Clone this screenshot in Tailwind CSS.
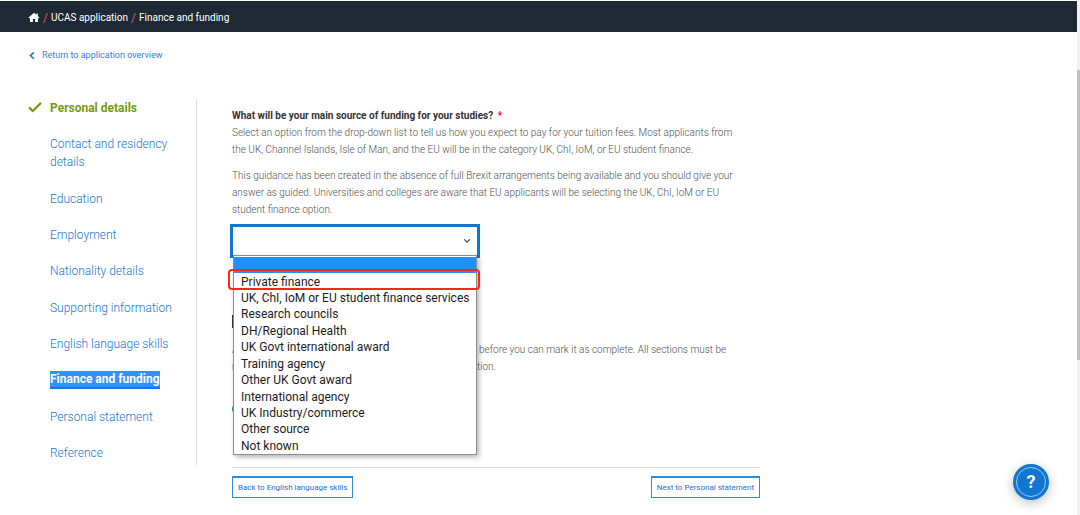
<!DOCTYPE html>
<html lang="en">

<head>
    <meta charset="UTF-8">
    <meta name="viewport" content="width=device-width, initial-scale=1.0">
    <script src="https://cdn.jsdelivr.net/npm/@tailwindcss/browser@4"></script>
    <title>UCAS application - Finance and funding</title>
</head>

<body class="flex h-screen overflow-hidden bg-white font-['Roboto',sans-serif] text-[#505050]">

    <div class="relative min-w-0 flex-1">
        <header class="mt-px flex h-[31px] items-center bg-[#1f2935] pt-[2px] pl-7 text-[10px] text-white">
            <nav aria-label="Breadcrumb" class="flex items-center gap-[3px]">
                <a href="#" aria-label="Home">
                    <svg class="h-3 w-3" viewBox="0 0 12 12" fill="currentColor">
                        <path d="M6 0.8 L0.6 5.6 L1.3 6.4 L2 6 V10 H4.9 V7 H7.1 V10 H10 V6 L10.7 6.4 L11.4 5.6 L9.9 4.2 V1.4 H8.4 V2.8 Z"></path>
                    </svg>
                </a>
                <span class="text-xs text-[#f0506e]">/</span>
                <a href="#">UCAS application</a>
                <span class="text-xs text-[#f0506e]">/</span>
                <a href="#">Finance and funding</a>
            </nav>
        </header>

        <a href="#" class="mt-4 ml-7 inline-flex h-4 items-center gap-[6px] text-[9px] text-[#3580d2]">
            <svg class="h-2 w-2" viewBox="0 0 8 8" fill="none" stroke="#0f76d1" stroke-width="1.5">
                <path d="M5.8 0.4 L2.4 3.6 L5.8 6.8"></path>
            </svg>
            Return to application overview
        </a>

        <div class="mt-8 flex">
            <nav aria-label="Sections" class="h-[366px] w-[197px] shrink-0 border-r border-[#dedede] pl-7">
                <ul class="flex h-full flex-col justify-between pb-[3px] pl-[22px] text-xs leading-[18px] font-light text-[#1878cf]">
                    <li class="-ml-[22px] flex items-center gap-2 font-bold text-[#769a09]">
                        <svg class="h-3 w-[14px]" viewBox="0 0 14 12" fill="none" stroke="currentColor" stroke-width="2.2">
                            <path d="M1 5.4 L4.7 9 L13 0.9"></path>
                        </svg>
                        <a href="#">Personal details</a>
                    </li>
                    <li class="w-[120px]"><a href="#">Contact and residency details</a></li>
                    <li><a href="#">Education</a></li>
                    <li><a href="#">Employment</a></li>
                    <li><a href="#">Nationality details</a></li>
                    <li><a href="#">Supporting information</a></li>
                    <li><a href="#">English language skills</a></li>
                    <li class="flex"><a href="#" aria-current="page" class="border-b-2 border-[#0a78f5] bg-[#3390ff] leading-4 font-bold text-white">Finance and funding</a></li>
                    <li><a href="#">Personal statement</a></li>
                    <li><a href="#">Reference</a></li>
                </ul>
            </nav>

            <main class="ml-[35px] w-[528px] pt-2 text-[10px] leading-[17px] font-light">
                <label for="funding" class="block font-bold text-[#333]">What will be your main source of funding for your studies? <span class="ml-[2px] text-[#e4002b]">*</span></label>
                <p class="max-w-[508px]">Select an option from the drop-down list to tell us how you expect to pay for your tuition fees. Most applicants from the UK, Channel Islands, Isle of Man, and the EU will be in the category UK, ChI, IoM, or EU student finance.</p>
                <p class="mt-[9px] max-w-[508px]">This guidance has been created in the absence of full Brexit arrangements being available and you should give your answer as guided. Universities and colleges are aware that EU applicants will be selecting the UK, ChI, IoM or EU student finance option.</p>

                <div class="relative -ml-[2px] mt-[6px] w-[250px]">
                    <select id="funding" class="block h-[34px] w-full appearance-none border-3 border-[#0f76d1] bg-white"></select>
                    <svg class="absolute top-[13px] right-[9px] h-2 w-2" viewBox="0 0 8 8" fill="none" stroke="#444" stroke-width="1.2">
                        <path d="M1.2 2.4 L4 5.2 L6.8 2.4"></path>
                    </svg>
                    <ul role="listbox" aria-label="Main source of funding" class="absolute top-[31px] left-[3px] z-10 grid h-[200px] w-[244px] auto-rows-fr items-center border border-[#8c8c8c] bg-white pt-px text-xs leading-4 font-normal text-[#1c1c1c] shadow-[2px_2px_5px_rgba(0,0,0,0.3)]">
                        <li role="option" aria-selected="true" class="h-full bg-[#1e90ff]"></li>
                        <li role="option" class="pl-[7px]">Private finance</li>
                        <li role="option" class="pl-[7px]">UK, ChI, IoM or EU student finance services</li>
                        <li role="option" class="pl-[7px]">Research councils</li>
                        <li role="option" class="pl-[7px]">DH/Regional Health</li>
                        <li role="option" class="pl-[7px]">UK Govt international award</li>
                        <li role="option" class="pl-[7px]">Training agency</li>
                        <li role="option" class="pl-[7px]">Other UK Govt award</li>
                        <li role="option" class="pl-[7px]">International agency</li>
                        <li role="option" class="pl-[7px]">UK Industry/commerce</li>
                        <li role="option" class="pl-[7px]">Other source</li>
                        <li role="option" class="pl-[7px]">Not known</li>
                    </ul>
                    <div class="absolute top-[45px] -left-[2px] z-20 h-[21px] w-[252px] rounded-sm border-2 border-[#f5281e]"></div>
                </div>

                <div class="mt-[57px] h-[13px] w-3 bg-[#333]"></div>
                <p class="mt-[13px] max-w-[508px]">All required questions in this section must be completed before you can mark it as complete. All sections must be marked as complete before you can submit your application.</p>
                <div class="mt-7 h-3 w-3 rounded-full bg-[#0f76d1]"></div>

                <div class="mt-[52px] flex justify-between border-t border-[#dcdcdc] pt-2">
                    <button type="button" class="h-[22px] border border-t-2 border-[#2f88da] px-[5px] text-[8px] leading-4 font-normal text-[#2472cc]">Back to English language skills</button>
                    <button type="button" class="h-[22px] border border-t-2 border-[#2f88da] px-[5px] text-[8px] leading-4 font-normal text-[#2472cc]">Next to Personal statement</button>
                </div>
            </main>
        </div>

        <button type="button" aria-label="Help" class="absolute right-7 bottom-[15px] flex h-9 w-9 items-center justify-center rounded-full bg-[#0f76d1] p-[3px] text-lg font-bold text-white shadow-[0_3px_12px_rgba(0,0,0,0.25)]">
            <span class="flex h-full w-full items-center justify-center rounded-full border border-[#9cc8ee]">?</span>
        </button>
    </div>

    <!-- page scrollbar -->
    <div class="w-[3px] bg-[#f1f1f1] pt-[70px]">
        <div class="h-[290px] bg-[#c1c1c1]"></div>
    </div>

</body>

</html>
